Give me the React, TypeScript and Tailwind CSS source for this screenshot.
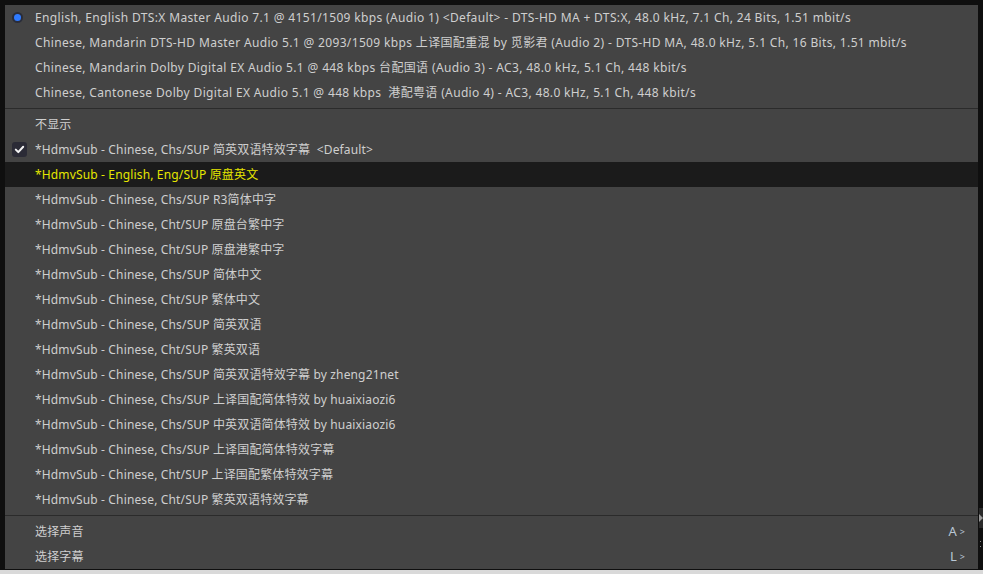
import React from 'react';

const audioTracks = [
  'English, English DTS:X Master Audio 7.1 @ 4151/1509 kbps (Audio 1) <Default> - DTS-HD MA + DTS:X, 48.0 kHz, 7.1 Ch, 24 Bits, 1.51 mbit/s',
  'Chinese, Mandarin DTS-HD Master Audio 5.1 @ 2093/1509 kbps 上译国配重混 by 觅影君 (Audio 2) - DTS-HD MA, 48.0 kHz, 5.1 Ch, 16 Bits, 1.51 mbit/s',
  'Chinese, Mandarin Dolby Digital EX Audio 5.1 @ 448 kbps 台配国语 (Audio 3) - AC3, 48.0 kHz, 5.1 Ch, 448 kbit/s',
  'Chinese, Cantonese Dolby Digital EX Audio 5.1 @ 448 kbps  港配粤语 (Audio 4) - AC3, 48.0 kHz, 5.1 Ch, 448 kbit/s',
];

const subtitles = [
  '不显示',
  '*HdmvSub - Chinese, Chs/SUP 简英双语特效字幕  <Default>',
  '*HdmvSub - English, Eng/SUP 原盘英文',
  '*HdmvSub - Chinese, Chs/SUP R3简体中字',
  '*HdmvSub - Chinese, Cht/SUP 原盘台繁中字',
  '*HdmvSub - Chinese, Cht/SUP 原盘港繁中字',
  '*HdmvSub - Chinese, Chs/SUP 简体中文',
  '*HdmvSub - Chinese, Cht/SUP 繁体中文',
  '*HdmvSub - Chinese, Chs/SUP 简英双语',
  '*HdmvSub - Chinese, Cht/SUP 繁英双语',
  '*HdmvSub - Chinese, Chs/SUP 简英双语特效字幕 by zheng21net',
  '*HdmvSub - Chinese, Chs/SUP 上译国配简体特效 by huaixiaozi6',
  '*HdmvSub - Chinese, Chs/SUP 中英双语简体特效 by huaixiaozi6',
  '*HdmvSub - Chinese, Chs/SUP 上译国配简体特效字幕',
  '*HdmvSub - Chinese, Cht/SUP 上译国配繁体特效字幕',
  '*HdmvSub - Chinese, Cht/SUP 繁英双语特效字幕',
];

function RadioDot() {
  return (
    <span className="flex h-[11px] w-[11px] items-center justify-center rounded-full bg-[#2a2d3a]">
      <span className="h-[7px] w-[7px] rounded-full bg-[#2f7bff]" />
    </span>
  );
}

function CheckBox() {
  return (
    <span className="flex h-[15px] w-[15px] items-center justify-center rounded-[3px] bg-[#2b2b36]">
      <svg width="11" height="11" viewBox="0 0 11 11" fill="none">
        <path d="M1.8 5.6 L4.3 8.1 L9.2 2.8" stroke="#f4f4f4" strokeWidth="2" strokeLinecap="round" strokeLinejoin="round" />
      </svg>
    </span>
  );
}

function Row({
  label,
  icon,
  active = false,
  shortcut,
  wide = false,
}: {
  label: string;
  icon?: React.ReactNode;
  active?: boolean;
  shortcut?: string;
  wide?: boolean;
}) {
  return (
    <div className={`flex h-[25px] items-center ${active ? 'bg-[#1b1b1b] text-[#e6e600]' : 'text-[#cfcfcf]'}`}>
      <div className="flex w-[30px] shrink-0 items-center pl-[7px]">{icon}</div>
      <span className={`whitespace-pre ${wide ? 'tracking-[0.35px]' : 'tracking-[0.15px]'}`}>{label}</span>
      {shortcut && (
        <span className="ml-auto flex items-center gap-[3px] pr-[13px] text-[#b9c7d4]">
          <span className="text-[13px]">{shortcut}</span>
          <span className="text-[9px]">&gt;</span>
        </span>
      )}
    </div>
  );
}

function Separator({ h }: { h: string }) {
  return (
    <div className={`flex ${h} items-center`}>
      <div className="h-px w-full bg-[#2b2b2b]" />
    </div>
  );
}

export default function App() {
  return (
    <div
      className="relative h-[574px] w-[983px] overflow-hidden bg-[#0f0f0f] text-[12px]"
      style={{ fontFamily: '"Noto Sans", "Noto Sans CJK SC", sans-serif' }}
    >
      <div className="flex h-[570px] flex-col pl-[5px] pt-[5px]">
        <div className="flex w-[973px] flex-col bg-[#444444]">
          {audioTracks.map((t, i) => (
            <Row key={t} label={t} wide icon={i === 0 ? <RadioDot /> : undefined} />
          ))}
          <Separator h="h-[7px]" />
          {subtitles.map((s, i) => (
            <Row key={s} label={s} icon={i === 1 ? <CheckBox /> : undefined} active={i === 2} />
          ))}
          <Separator h="h-[7px]" />
          <Row label="选择声音" shortcut="A" />
          <Row label="选择字幕" shortcut="L" />
        </div>
      </div>
      <div className="h-[4px] w-full bg-[#d9d9d9]" />
      {/* scroll bits at the right edge */}
      <div className="absolute right-0 top-[508px] flex h-[20px] w-[4px] items-center bg-[#2a2a2a]">
        <div className="h-0 w-0 border-y-[4px] border-l-[4px] border-y-transparent border-l-[#9a9a9a]" />
      </div>
      <div className="absolute right-[2px] top-[541px] flex flex-col gap-[4px]">
        <div className="h-px w-px bg-[#8a8a8a]" />
        <div className="h-px w-px bg-[#8a8a8a]" />
      </div>
    </div>
  );
}
